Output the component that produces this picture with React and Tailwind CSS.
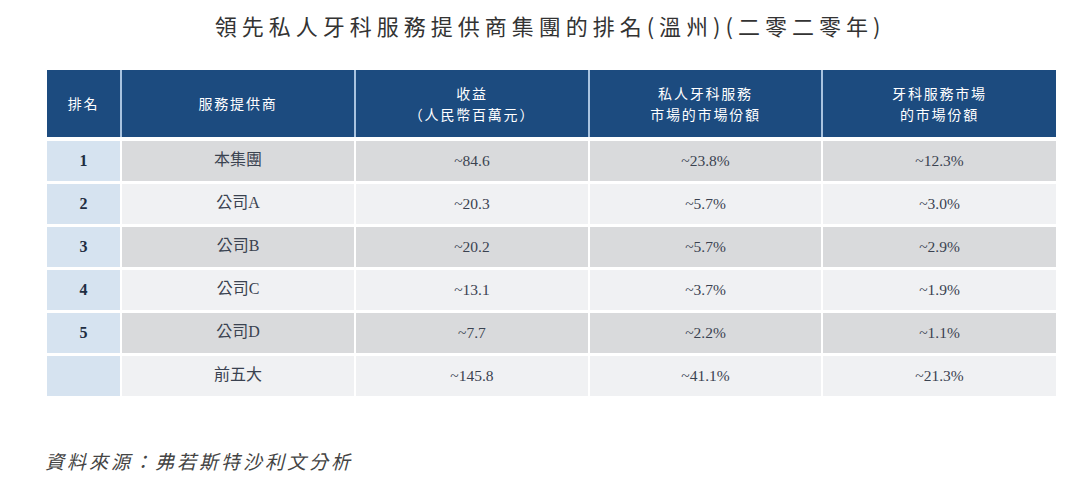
const rows = [
  { rank: "1", name: "本集團", rev: "~84.6", priv: "~23.8%", dental: "~12.3%" },
  { rank: "2", name: "公司A", rev: "~20.3", priv: "~5.7%", dental: "~3.0%" },
  { rank: "3", name: "公司B", rev: "~20.2", priv: "~5.7%", dental: "~2.9%" },
  { rank: "4", name: "公司C", rev: "~13.1", priv: "~3.7%", dental: "~1.9%" },
  { rank: "5", name: "公司D", rev: "~7.7", priv: "~2.2%", dental: "~1.1%" },
  { rank: "", name: "前五大", rev: "~145.8", priv: "~41.1%", dental: "~21.3%" },
];

const cols = "grid grid-cols-[73px_232px_232px_231px_233px] gap-x-[2px]";

export default function App() {
  return (
    <div className="w-[1080px] h-[488px] bg-white font-['Noto_Sans_CJK_TC',sans-serif] overflow-hidden">
      <h1 className="pt-[10px] pl-[20px] h-[52px] text-center text-[22px] leading-[30px] tracking-[5px] text-[#333] font-normal">
        領先私人牙科服務提供商集團的排名(溫州)(二零二零年)
      </h1>

      <div className="ml-[47px] mt-[18px] w-[1009px]">
        {/* header */}
        <div className={`${cols} h-[67px] bg-[#a9c3df] text-white text-[14px] leading-[21px] tracking-[1.8px]`}>
          <div className="bg-[#1c4b7f] flex items-center justify-center">排名</div>
          <div className="bg-[#1c4b7f] flex items-center justify-center">服務提供商</div>
          <div className="bg-[#1c4b7f] flex flex-col items-center justify-center">
            <span>收益</span>
            <span>（人民幣百萬元）</span>
          </div>
          <div className="bg-[#1c4b7f] flex flex-col items-center justify-center">
            <span>私人牙科服務</span>
            <span>市場的市場份額</span>
          </div>
          <div className="bg-[#1c4b7f] flex flex-col items-center justify-center">
            <span>牙科服務市場</span>
            <span>的市場份額</span>
          </div>
        </div>

        <div className="mt-[4px] flex flex-col gap-y-[3px] font-['Liberation_Serif','Noto_Sans_CJK_TC',serif] text-[15.5px] text-[#3a4250]">
          {rows.map((r, i) => {
            const bg = i % 2 === 0 ? "bg-[#d9dadc]" : "bg-[#f0f1f3]";
            return (
              <div key={i} className={`${cols} h-[40px]`}>
                <div className="bg-[#d6e3f0] flex items-center justify-center font-bold text-[16px] text-[#1e2d42]">
                  {r.rank}
                </div>
                <div className={`${bg} flex items-center justify-center pb-[2px] text-[16px]`}>{r.name}</div>
                <div className={`${bg} flex items-center justify-center`}>{r.rev}</div>
                <div className={`${bg} flex items-center justify-center`}>{r.priv}</div>
                <div className={`${bg} flex items-center justify-center`}>{r.dental}</div>
              </div>
            );
          })}
        </div>
      </div>

      <p className="ml-[45px] mt-[52px] text-[19px] leading-[26px] italic tracking-[3px] text-[#444]">
        資料來源：弗若斯特沙利文分析
      </p>
    </div>
  );
}
